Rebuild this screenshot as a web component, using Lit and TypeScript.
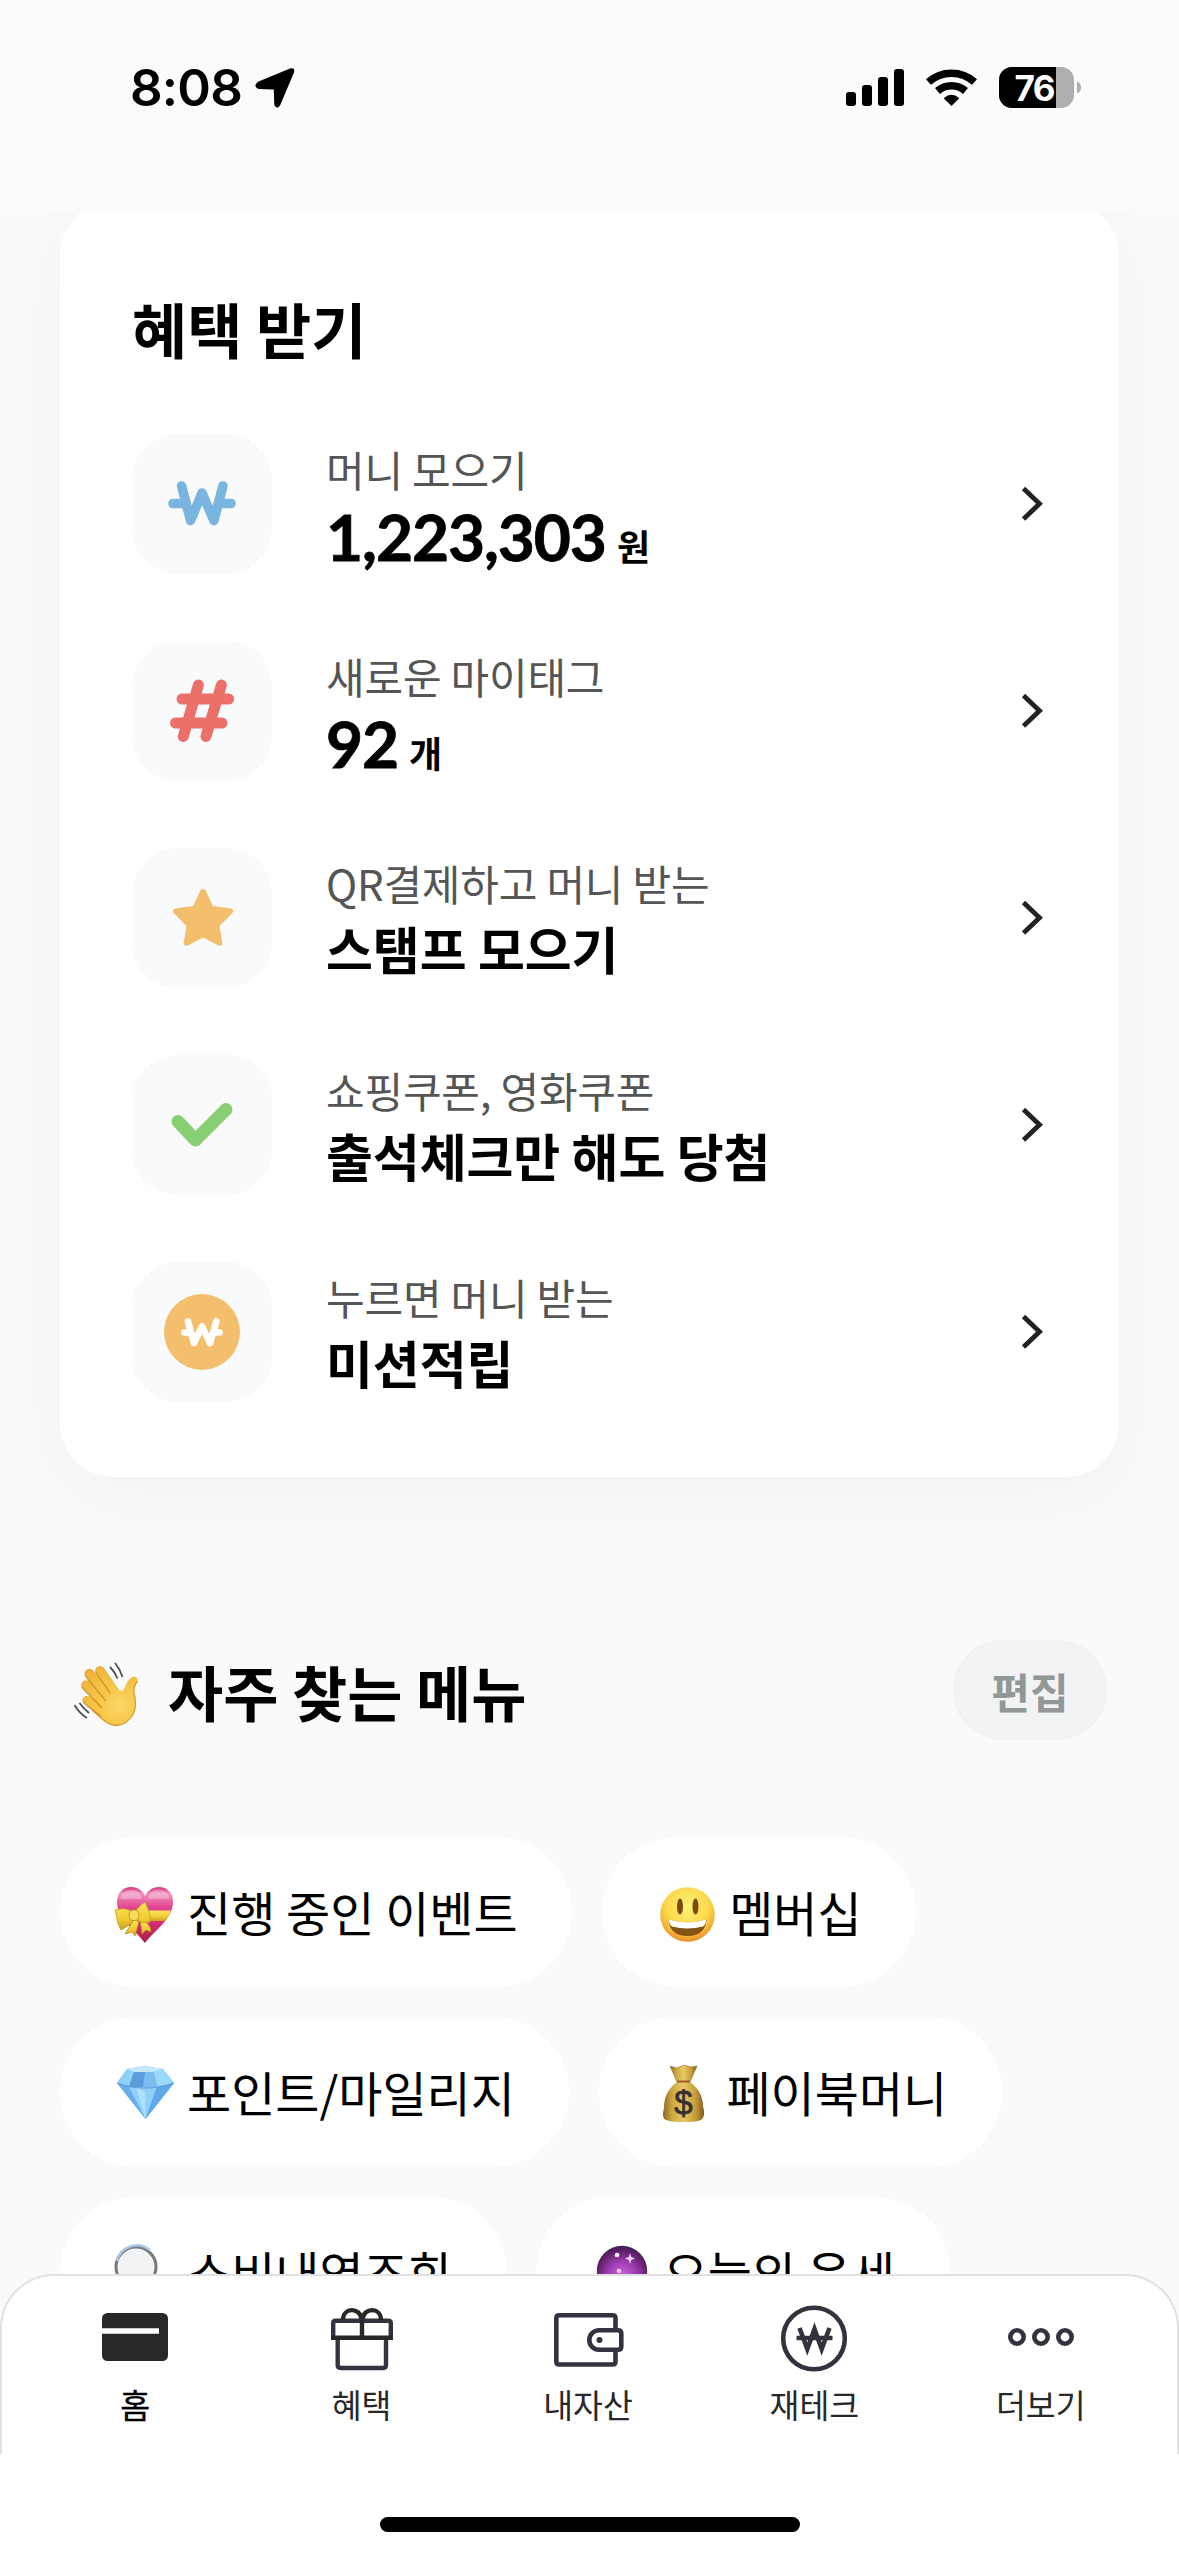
import { LitElement, html, svg, css } from "lit";
import { customElement, property } from "lit/decorators.js";

type Icon = unknown;

const wonStroke = svg`<path d="M49.6 52L58.6 86.5L70 59L81.9 86.5L90.9 52M41 69.5H54M86 69.5H99" fill="none" stroke="#79b5de" stroke-width="9.6" stroke-linecap="round" stroke-linejoin="round"/>`;
const hash = svg`<path d="M66.4 44L51.3 95.5M89.4 44L73.9 95.5M50 58H96.6M43.5 82H90" fill="none" stroke="#ea7069" stroke-width="11" stroke-linecap="round"/>`;
const star = svg`<path d="M71 43.5L79.2 60.5L98.3 63.3L84.6 77L87.6 95L71 86.3L54.4 95L57.4 77L43.7 63.3L62.8 60.5Z" fill="#f4bf6c" stroke="#f4bf6c" stroke-width="5.5" stroke-linejoin="round"/>`;
const check = svg`<path d="M46 66.5L63.5 85L94 54.5" fill="none" stroke="#87cf72" stroke-width="13" stroke-linecap="round" stroke-linejoin="round"/>`;
const coin = svg`<circle cx="70" cy="70" r="38" fill="#f4bf6c"/><path d="M56 59.5L62 81L70 64.5L78 81L84.3 59.5M52.5 70.5H58M82 70.5H87.5" fill="none" stroke="#fff" stroke-width="6.6" stroke-linecap="round" stroke-linejoin="round"/>`;

interface Benefit { icon: Icon; label: string; value: string; unit?: string; }

const benefits: Benefit[] = [
  { icon: wonStroke, label: "머니 모으기", value: "1,223,303", unit: "원" },
  { icon: hash, label: "새로운 마이태그", value: "92", unit: "개" },
  { icon: star, label: "QR결제하고 머니 받는", value: "스탬프 모으기" },
  { icon: check, label: "쇼핑쿠폰, 영화쿠폰", value: "출석체크만 해도 당첨" },
  { icon: coin, label: "누르면 머니 받는", value: "미션적립" },
];

const heart = svg`
  <defs>
    <linearGradient id="h1" x1="0" y1="0" x2="0" y2="1"><stop offset="0" stop-color="#d8307c"/><stop offset=".12" stop-color="#ef8fbd"/><stop offset=".38" stop-color="#e0408c"/><stop offset=".6" stop-color="#da2f77"/><stop offset="1" stop-color="#a91d45"/></linearGradient>
    <linearGradient id="h2" x1="0" y1="0" x2="0" y2="1"><stop offset="0" stop-color="#fbe35e"/><stop offset=".6" stop-color="#f0cc35"/><stop offset="1" stop-color="#c99f20"/></linearGradient>
  </defs>
  <path d="M31 61C23 50 3 37 3 20C3 11 9 5 17 5C24 5 29 9 31 14C33 9 38 5 45 5C53 5 59 11 59 20C59 37 39 50 31 61Z" fill="url(#h1)"/>
  <path d="M6 17C8 10 13 8 18 8C24 8 27 12 28 17ZM34 17C35 11 39 8 45 8C51 8 55 12 56 17Z" fill="#fff" opacity=".28"/>
  <path d="M34 28.5H57Q55 34 51.5 39H34Z" fill="url(#h2)"/>
  <path d="M20 37L11 52L18 50L21 54L25 40ZM26 37L28 52L32 48L37 50Q37 41 26 37Z" fill="url(#h2)" stroke="#b78b1d" stroke-width=".7"/>
  <path d="M18 30C12 25 5 27 1 28C3 36 3 42 7 48C13 45 17 42 20 37ZM21 29C25 25 28 22 31 20C33 25 37 31 36 40C31 41 26 41 22 37Z" fill="url(#h2)" stroke="#c7a025" stroke-width=".8"/>
  <rect x="15" y="28" width="10" height="10.5" rx="4" fill="#f6dc57" stroke="#b78b1d" stroke-width=".8"/>`;

const gem = svg`
  <path d="M3 21L13 7L31 4L49 7L60 21L31.500 57Z" fill="#6db9f2"/>
  <path d="M3 21L13 7L20 10L15 24Z" fill="#8fd0f8"/>
  <path d="M13 7L31 4L49 7L40 10H20Z" fill="#c2e8fc"/>
  <path d="M20 10H40L43 25H15Z" fill="#5b9dda"/><path d="M31 10H40L43 25H29Z" fill="#7cbdf0"/>
  <path d="M40 10L49 7L60 21L43 25Z" fill="#9bd8fa"/>
  <path d="M3 21L15 24L31.500 57Z" fill="#68aeec"/><path d="M15 25H43L31.500 57Z" fill="#8fd1f9"/>
  <path d="M22 25L31.500 57L31 30Z" fill="#aee2fc"/><path d="M43 25L60 21L31.500 57Z" fill="#60a8e9"/>
  <path d="M3 21Q15 26 31 26T60 21" fill="none" stroke="#5a9ad6" stroke-width="1"/>`;

const smile = svg`
  <defs><radialGradient id="s1" cx=".5" cy=".35" r=".65"><stop offset="0" stop-color="#fff176"/><stop offset=".6" stop-color="#fcd94a"/><stop offset=".88" stop-color="#f3ab30"/><stop offset="1" stop-color="#e08a20"/></radialGradient></defs>
  <circle cx="31.500" cy="32.500" r="27.300" fill="url(#s1)"/>
  <ellipse cx="24" cy="24.500" rx="3" ry="8" fill="#7a4b0c"/><ellipse cx="39.500" cy="24.500" rx="3" ry="8" fill="#7a4b0c"/>
  <path d="M12.500 37.500Q31.500 43 50.500 37.500Q49 54 31.500 54T12.500 37.500Z" fill="#855312"/>
  <path d="M12.800 37.500Q31.500 43 50.200 37.500Q50 42.500 47 44.500Q31.500 48.500 16 44.500Q13 42.500 12.800 37.500Z" fill="#fff"/>`;

const bag = svg`
  <defs><linearGradient id="b1" x1="0" x2="1"><stop offset="0" stop-color="#8c6a22"/><stop offset=".22" stop-color="#cda63f"/><stop offset=".5" stop-color="#e6ca63"/><stop offset=".8" stop-color="#c39a38"/><stop offset="1" stop-color="#7e5b1e"/></linearGradient></defs>
  <path d="M17 4L24 6L31 3L38 5L44 4L37 20H24Z" fill="url(#b1)" stroke="#94702b" stroke-width=".6"/>
  <path d="M24 20H37C45 26 50 34 50 44Q53 55 48 58Q43 60 31 60T13 58Q8 56 11 46C11 34 16 26 24 20Z" fill="url(#b1)"/>
  <path d="M24 19.500H37" stroke="#a34f2a" stroke-width="1.800"/>
  <text x="30.500" y="52" text-anchor="middle" font-family="Liberation Sans" font-weight="400" font-size="33" fill="#35302f" stroke="#35302f" stroke-width=".8">$</text>`;

const lens = svg`
  <circle cx="22" cy="25" r="20" fill="#f2f3f4" stroke="#77797c" stroke-width="3"/>
  <path d="M3 19A20.500 20.500 0 0 1 36 8" fill="none" stroke="#a9c9ea" stroke-width="2.500"/>
  <path d="M37 40L58 60" stroke="#55565a" stroke-width="7" stroke-linecap="round"/>`;

const orb = svg`
  <defs><radialGradient id="o1" cx=".5" cy=".6" r=".6"><stop offset="0" stop-color="#cf63dd"/><stop offset=".5" stop-color="#9b3bb0"/><stop offset=".85" stop-color="#5d1f68"/><stop offset="1" stop-color="#3a2350"/></radialGradient></defs>
  <circle cx="32" cy="29" r="25.200" fill="url(#o1)"/>
  <circle cx="27" cy="13" r="2.300" fill="#fff"/><path d="M36 11L37.200 15L41 16.500L37.200 18L36 22L34.800 18L31 16.500L34.800 15Z" fill="#fbd9ff" transform="translate(4 0)"/><circle cx="29" cy="29" r="2.300" fill="#f7c8ff"/>`;

const wave = svg`
  <defs><radialGradient id="w1" gradientUnits="userSpaceOnUse" cx="60" cy="56" r="44"><stop offset="0" stop-color="#fbd768"/><stop offset=".5" stop-color="#f6c647"/><stop offset="1" stop-color="#efb53a"/></radialGradient></defs>
  <g fill="none" stroke-linecap="round" stroke-linejoin="round">
    <path d="M27 50.500L48 67" stroke="#d18f28" stroke-width="9"/><path d="M27 50L48 66" stroke="url(#w1)" stroke-width="7.500"/>
    <path d="M26.200 35.500L50 60" stroke="#d18f28" stroke-width="10"/><path d="M26.200 35L50 59" stroke="url(#w1)" stroke-width="8.500"/>
    <path d="M29.500 24L54 54" stroke="#d18f28" stroke-width="10"/><path d="M29.500 23.500L54 53" stroke="url(#w1)" stroke-width="8.500"/>
    <path d="M40 21L60 50" stroke="#d18f28" stroke-width="9.500"/><path d="M40 20.500L60 49" stroke="url(#w1)" stroke-width="8"/>
  </g>
  <path d="M42 58L50 43Q56 39 62 41Q65 38 66.500 33.500Q69 28 73.500 26.500Q78 26.500 77.500 31Q73.500 36 74 43Q77.500 57 73 64.500Q67 74.500 57 75.500Q49 75.500 41 68Z" fill="url(#w1)"/>
  <path d="M77.500 31Q73.500 36 74 43Q77.500 57 73 64.500Q67 74.500 57 75.500Q49 75.500 41 68L32 60" fill="none" stroke="#dc9a2e" stroke-width="1.300"/>
  <path d="M50 17Q55 22 57.500 28.500M55 13Q60 19 62.500 27M14.500 55Q20 64 27 68M19.500 53Q24 59 29 63" fill="none" stroke="#4d4f52" stroke-width="1.800"/>`;

interface Chip { icon: Icon; text: string; }

const chipRows: Chip[][] = [
  [{ icon: heart, text: "진행 중인 이벤트" }, { icon: smile, text: "멤버십" }],
  [{ icon: gem, text: "포인트/마일리지" }, { icon: bag, text: "페이북머니" }],
  [{ icon: lens, text: "소비내역조회" }, { icon: orb, text: "오늘의 운세" }],
];

const tabs: { icon: Icon; text: string; active?: boolean }[] = [
  { text: "홈", active: true, icon: svg`<rect x="7" y="13" width="66" height="48" rx="5.500" fill="#282828"/><path d="M7 31H64" stroke="#fff" stroke-width="5.500"/>` },
  { text: "혜택", icon: svg`<g fill="none" stroke-width="4.400"><path d="M11.200 38V23.200Q11.200 20.800 13.600 20.800H66.400Q68.800 20.800 68.800 23.200V38" stroke="#33333f"/><path d="M15.700 40V65Q15.700 68 18.700 68H61Q64 68 64 65V40" stroke="#33333f"/><path d="M9 37.800H71M40 20V38M21 20C21 7 38 7 39.500 19M40.500 19C42 7 59 7 59 20" stroke="#282828"/></g>` },
  { text: "내자산", icon: svg`<g fill="none" stroke="#33333f" stroke-width="4.600"><path d="M67.500 28V18.300Q67.500 15.300 64.500 15.300H11.300Q8.300 15.300 8.300 18.300V61.500Q8.300 64.500 11.300 64.500H64.500Q67.500 64.500 67.500 61.500V52"/><path d="M51 30.300H70Q73.300 30.300 73.300 33.500V46.500Q73.300 49.700 70 49.700H51A9.700 9.700 0 0 1 51 30.300Z"/></g><circle cx="51.500" cy="40" r="3" fill="#33333f"/>` },
  { text: "재테크", icon: svg`<g fill="none" stroke="#33333f"><circle cx="40" cy="38.500" r="30.800" stroke-width="4.600"/><path d="M25.500 28L33.300 49L40.500 29L47.700 49L55.500 28" stroke-width="4.600"/><path d="M22.500 38H58.500" stroke-width="4.600"/></g>` },
  { text: "더보기", icon: svg`<g fill="none" stroke="#33333f" stroke-width="4.600"><circle cx="16" cy="37" r="6.700"/><circle cx="40" cy="37" r="6.700"/><circle cx="64" cy="37" r="6.700"/></g>` },
];

@customElement("status-bar")
class StatusBar extends LitElement {
  static styles = css`
    :host { display: flex; justify-content: space-between; box-sizing: border-box; height: 212px; padding: 57px 96px 0 130px; background: #fafbfd; color: #000; font-family: Inter, sans-serif; }
    .left { display: flex; height: 62px; align-items: center; gap: 13px; }
    .time { font-size: 51px; font-weight: 600; letter-spacing: -0.8px; line-height: 62px; }
    .right { display: block; }
    .pct { font: 700 35px Inter, sans-serif; letter-spacing: -1.6px; }
  `;
  render() {
    return html`
      <div class="left">
        <span class="time">8:08</span>
        <svg width="40" height="42" viewBox="0 0 40 42"><path d="M35 1.500Q40.500 0 39 5.500L25 38.500Q22 43 19.300 38L18.800 22.500L3.500 22Q-2.500 19.500 3 14.800Z" fill="#000"/></svg>
      </div>
      <svg class="right" width="243" height="62" viewBox="840 57 243 62">
        <rect x="846" y="92" width="10" height="14" rx="3"/><rect x="862" y="85" width="10" height="21" rx="3"/><rect x="878" y="77" width="10" height="29" rx="3"/><rect x="894" y="69" width="10" height="37" rx="3"/>
        <g fill="none" stroke="#000" stroke-width="7.600"><path d="M928.500 82A34.500 34.500 0 0 1 974.500 82"/><path d="M937.500 91A21.500 21.500 0 0 1 965.500 91"/></g>
        <path d="M951.500 106L943.700 98.200Q951.500 91.500 959.300 98.200Z"/>
        <clipPath id="lvl"><rect x="999" y="67" width="57" height="41"/></clipPath>
        <rect x="999" y="67" width="75" height="41" rx="13" fill="#aeaeb0"/>
        <rect x="999" y="67" width="75" height="41" rx="13" clip-path="url(#lvl)"/>
        <path d="M1077 81.500Q1081 83 1081 87.500T1077 93.500Z" fill="#aeaeb0"/>
        <text class="pct" x="1014.500" y="100.500" fill="#fff">76</text>
      </svg>`;
  }
}

@customElement("benefit-row")
class BenefitRow extends LitElement {
  @property({ attribute: false }) item!: Benefit;
  static styles = css`
    :host { display: flex; align-items: center; height: 140px; }
    .box { width: 140px; height: 140px; border-radius: 45px; background: #f9fafc; flex: none; }
    .text { flex: 1; margin-left: 54px; display: flex; flex-direction: column; height: 140px; white-space: nowrap; }
    .label { font-size: 42px; line-height: 60px; height: 62px; padding-top: 5px; box-sizing: border-box; letter-spacing: -0.2px; color: #555; }
    .value { font-size: 51px; font-weight: 700; line-height: 76px; height: 76px; letter-spacing: -0.1px; color: #000; }
    .line { display: flex; align-items: baseline; padding-top: 3px; }
    .num { font-family: Lato, sans-serif; font-size: 64px; font-weight: 700; line-height: 76px; letter-spacing: -1.1px; -webkit-text-stroke: 0.8px #000; color: #000; }
    .unit { font-size: 36px; font-weight: 700; line-height: 40px; margin-left: 11px; color: #000; }
    .chev { margin-right: 3px; flex: none; }
  `;
  render() {
    const { icon, label, value, unit } = this.item;
    return html`
      <svg class="box" viewBox="0 0 140 140">${icon}</svg>
      <div class="text">
        <span class="label">${label}</span>
        ${unit
          ? html`<div class="line"><span class="num">${value}</span><span class="unit">${unit}</span></div>`
          : html`<span class="value">${value}</span>`}
      </div>
      <svg class="chev" width="24" height="40" viewBox="0 0 24 40"><path d="M3.500 4.500L19.500 19.800L3.500 35" fill="none" stroke="#222" stroke-width="4.800"/></svg>`;
  }
}

@customElement("menu-chip")
class MenuChip extends LitElement {
  @property({ attribute: false }) item!: Chip;
  static styles = css`
    :host { display: flex; align-items: center; gap: 11px; height: 150px; padding: 0 54.5px 0 56px; border-radius: 75px; background: #fff; box-sizing: border-box; }
    .emoji { flex: none; overflow: visible; margin-top: 3px; }
    .text { font-size: 48px; line-height: 72px; margin-bottom: 2px; white-space: nowrap; color: #000; }
  `;
  render() {
    return html`<svg class="emoji" width="60" height="64" viewBox="2 0 60 64">${this.item.icon}</svg><span class="text">${this.item.text}</span>`;
  }
}

@customElement("tab-bar")
class TabBar extends LitElement {
  static styles = css`
    :host { display: flex; flex-direction: column; align-items: center; height: 282px; background: #fff; border-radius: 54px 54px 0 0; margin-top: -57px; position: relative; }
    .tabs { display: flex; box-sizing: border-box; width: 100%; height: 180px; padding: 24px 23px 0 20px; border: 2px solid #e1e1e1; border-bottom: none; border-radius: 54px 54px 0 0; }
    .tab { flex: 1; display: flex; flex-direction: column; align-items: center; font-size: 32.5px; line-height: 48px; color: #282828; white-space: nowrap; }
    .active { color: #000; -webkit-text-stroke: 0.4px #000; }
    .home { width: 420px; height: 15px; border-radius: 8px; background: #000; margin-top: 63px; }
  `;
  render() {
    return html`
      <div class="tabs">
        ${tabs.map((t) => html`<div class="tab ${t.active ? "active" : ""}">
          <svg width="80" height="80" viewBox="0 0 80 80">${t.icon}</svg><span>${t.text}</span>
        </div>`)}
      </div>
      <div class="home"></div>`;
  }
}

@customElement("app-root")
class AppRoot extends LitElement {
  static styles = css`
    :host { display: flex; flex-direction: column; width: 1179px; height: 2556px; overflow: hidden; background: #fafafa; font-family: "Noto Sans CJK KR", sans-serif; color: #000; }
    .scroll { flex: 1; min-height: 0; overflow: hidden; display: flex; flex-direction: column; }
    .card { flex: none; box-sizing: border-box; height: 1276px; margin: -11px 60px 0; padding: 91px 72px 0; border-radius: 54px; background: #fff; box-shadow: 0 18px 76px rgba(0, 0, 0, 0.034); }
    .title { margin: 0 0 70px; font-size: 60px; font-weight: 700; line-height: 72px; }
    .rows { display: flex; flex-direction: column; gap: 67px; }
    .head { flex: none; display: flex; align-items: center; height: 100px; margin: 163px 72px 0 60px; }
    .wave { flex: none; margin-top: 9px; }
    .name { margin: 2px 0 0 8px; font-size: 60px; font-weight: 700; line-height: 72px; flex: 1; }
    .edit { box-sizing: border-box; width: 154px; height: 100px; border: 2px solid #f0f1f1; border-radius: 50px; background: #f1f3f5; color: #929797; font-size: 42px; font-weight: 700; line-height: 97px; text-align: center; }
    .chips { flex: none; display: flex; flex-direction: column; gap: 30px; margin: 97px 60px 0; }
    .chiprow { display: flex; gap: 30px; }
  `;
  render() {
    return html`
      <status-bar></status-bar>
      <div class="scroll">
        <section class="card">
          <h2 class="title">혜택 받기</h2>
          <div class="rows">${benefits.map((b) => html`<benefit-row .item=${b}></benefit-row>`)}</div>
        </section>
        <div class="head">
          <svg class="wave" width="100" height="90" viewBox="0 0 100 90">${wave}</svg>
          <h2 class="name">자주 찾는 메뉴</h2>
          <div class="edit">편집</div>
        </div>
        <div class="chips">
          ${chipRows.map((r) => html`<div class="chiprow">${r.map((c) => html`<menu-chip .item=${c}></menu-chip>`)}</div>`)}
        </div>
      </div>
      <tab-bar></tab-bar>`;
  }
}
